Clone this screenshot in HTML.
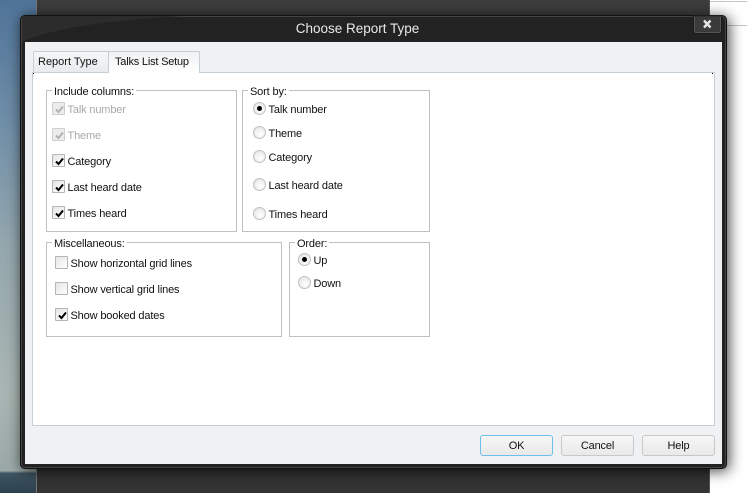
<!DOCTYPE html>
<html><head><meta charset="utf-8"><style>
html,body{margin:0;padding:0}
body{width:747px;height:493px;overflow:hidden;position:relative;background:#fff;font-family:"Liberation Sans",sans-serif;font-size:11px;letter-spacing:-.15px;color:#111}
div{position:absolute;box-sizing:border-box}
.t{white-space:nowrap;line-height:16px;height:14px}
.g{border:1px solid #c0c0c0;background:transparent}
.l{background:#fff;padding:0 2px 0 2px;white-space:nowrap;line-height:16px;height:14px}
.c{width:13px;height:13px;border:1px solid #b5b5b5;background:linear-gradient(135deg,#e6e6e6,#fdfdfd);border-radius:1px}
.c svg{position:absolute;left:1px;top:1px}
.d{background:#ececec;border-color:#cfcfcf}
.r{width:13px;height:13px;border:1px solid #c0c0c0;border-radius:50%;background:radial-gradient(circle at 60% 65%,#fff,#e0e0e0)}
.r i{position:absolute;left:3px;top:3px;width:5px;height:5px;border-radius:50%;background:#000;display:block}
.b{height:21px;top:435px;width:73px;border:1px solid #c8c8c8;border-radius:3px;background:linear-gradient(#f6f6f6,#e9e9e9);text-align:center;line-height:21px}
.gr{color:#a8a8ae}
</style></head><body>
<div style="left:0;top:0;width:36px;height:493px;background:linear-gradient(#4f7398 0,#6f8ea8 25%,#94a7ad 50%,#a9b5b2 80%,#9aa8a6 95.5%,#3f5563 96%,#2c3f4c 100%)"></div>
<div style="left:36px;top:0;width:674px;height:493px;background:linear-gradient(#3d3d3d,#333);border-left:1px solid #777;border-right:1px solid #555"></div>
<div style="left:710px;top:1px;width:37px;height:1px;background:#c4c4c8"></div>
<div style="left:710px;top:25px;width:37px;height:1px;background:#c4c4c8"></div>
<div style="left:20px;top:15px;width:707px;height:454px;background:#222;border:1px solid #111;border-radius:5px;box-shadow:0 0 0 1px #444 inset,2px 2px 14px rgba(0,0,0,.75)"></div>
<svg width="300" height="27" style="position:absolute;left:22px;top:16px"><path d="M0 0H160C90 4 30 12 0 26Z" fill="#2c2c2c"/></svg>
<div class="t" style="left:20px;width:675px;top:20px;height:18px;line-height:18px;text-align:center;color:#e8e8e8;font-size:13.5px;letter-spacing:0">Choose Report Type</div>
<div style="left:694px;top:16px;width:27px;height:17px;background:#3a3a3a;border:1px solid #555;border-top-color:#333;border-radius:0 0 2px 2px;box-shadow:0 0 0 1px #1a1a1a">
<svg width="25" height="15" style="position:absolute;left:0;top:0"><path d="M9 3.5 L15.5 10.5 M15.5 3.5 L9 10.5" stroke="#e6e6e6" stroke-width="2.4" fill="none"/></svg></div>
<div style="left:25px;top:42px;width:697px;height:422px;background:#f0f1f3"></div>
<div style="left:32px;top:72px;width:683px;height:354px;background:#fff;border:1px solid #c6ced6"></div>
<div style="left:33px;top:73px;width:1px;height:1px;background:#000"></div>
<div style="left:712px;top:73px;width:1px;height:1px;background:#000"></div>
<div style="left:33px;top:51px;width:76px;height:21px;background:linear-gradient(#f6f7f8,#e8eaec);border:1px solid #c6ced6;border-bottom:none;border-radius:2px 0 0 0"></div>
<div class="t" style="left:38px;top:54px;letter-spacing:0">Report Type</div>
<div style="left:108px;top:51px;width:92px;height:22px;background:linear-gradient(#f0f1f3,#fff);border:1px solid #c6ced6;border-bottom:none;border-radius:2px 2px 0 0"></div>
<div class="t" style="left:115px;top:54px;letter-spacing:-.2px">Talks List Setup</div>

<div class="g" style="left:46px;top:90px;width:191px;height:142px"></div>
<div class="l" style="left:52px;top:84px">Include columns:</div>
<div class="c d" style="left:52px;top:102px"><svg width="11" height="11"><path d="M2 5.5 L4.5 8 L9 2.5" stroke="#b4b4b4" stroke-width="2" fill="none"/></svg></div><div class="t gr" style="left:67.5px;top:102px">Talk number</div>
<div class="c d" style="left:52px;top:128px"><svg width="11" height="11"><path d="M2 5.5 L4.5 8 L9 2.5" stroke="#b4b4b4" stroke-width="2" fill="none"/></svg></div><div class="t gr" style="left:67.5px;top:128px">Theme</div>
<div class="c" style="left:52px;top:154px"><svg width="11" height="11"><path d="M2 5.5 L4.5 8 L9 2.5" stroke="#000" stroke-width="2" fill="none"/></svg></div><div class="t" style="left:67.5px;top:154px">Category</div>
<div class="c" style="left:52px;top:180px"><svg width="11" height="11"><path d="M2 5.5 L4.5 8 L9 2.5" stroke="#000" stroke-width="2" fill="none"/></svg></div><div class="t" style="left:67.5px;top:180px">Last heard date</div>
<div class="c" style="left:52px;top:206px"><svg width="11" height="11"><path d="M2 5.5 L4.5 8 L9 2.5" stroke="#000" stroke-width="2" fill="none"/></svg></div><div class="t" style="left:67.5px;top:206px">Times heard</div>

<div class="g" style="left:242px;top:90px;width:188px;height:142px"></div>
<div class="l" style="left:248px;top:84px">Sort by:</div>
<div class="r" style="left:253px;top:102px"><i></i></div><div class="t" style="left:268.5px;top:102px">Talk number</div>
<div class="r" style="left:253px;top:126px"></div><div class="t" style="left:268.5px;top:126px">Theme</div>
<div class="r" style="left:253px;top:150px"></div><div class="t" style="left:268.5px;top:150px">Category</div>
<div class="r" style="left:253px;top:178px"></div><div class="t" style="left:268.5px;top:178px">Last heard date</div>
<div class="r" style="left:253px;top:207px"></div><div class="t" style="left:268.5px;top:207px">Times heard</div>

<div class="g" style="left:46px;top:242px;width:236px;height:95px"></div>
<div class="l" style="left:52px;top:236px">Miscellaneous:</div>
<div class="c" style="left:55px;top:256px"></div><div class="t" style="left:70.5px;top:256px">Show horizontal grid lines</div>
<div class="c" style="left:55px;top:282px"></div><div class="t" style="left:70.5px;top:282px">Show vertical grid lines</div>
<div class="c" style="left:55px;top:308px"><svg width="11" height="11"><path d="M2 5.5 L4.5 8 L9 2.5" stroke="#000" stroke-width="2" fill="none"/></svg></div><div class="t" style="left:70.5px;top:308px">Show booked dates</div>

<div class="g" style="left:289px;top:242px;width:141px;height:95px"></div>
<div class="l" style="left:295px;top:236px">Order:</div>
<div class="r" style="left:298px;top:253px"><i></i></div><div class="t" style="left:313.5px;top:253px">Up</div>
<div class="r" style="left:298px;top:276px"></div><div class="t" style="left:313.5px;top:276px">Down</div>

<div class="b" style="left:480px;border-color:#6cc0ea">OK</div>
<div class="b" style="left:561px">Cancel</div>
<div class="b" style="left:642px">Help</div>
</body></html>
